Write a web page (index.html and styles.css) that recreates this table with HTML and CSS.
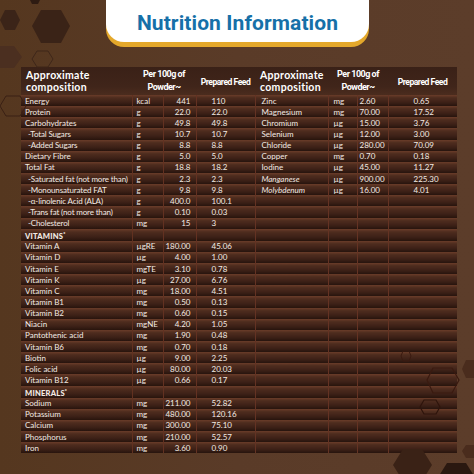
FILE: index.html
```html
<!DOCTYPE html>
<html>
<head>
<meta charset="utf-8">
<link rel="stylesheet" href="styles.css">
</head>
<body>
<div class="page">
  <svg class="deco" width="474" height="474" viewBox="0 0 474 474">
    <polygon points="5,10 15,10 20,20 15,30 5,30 0,20" fill="#3b2418"/>
    <polygon points="41,10 61,10 70,26 61,43 41,43 32,26" fill="#3a2317"/>
    <polygon points="0,46 14,46 22,57 14,68 0,68" fill="#4b2f20"/>
    <polygon points="37,51 48,51 53,59 48,67 37,67 32,59" fill="none" stroke="#3e2619" stroke-width="1"/>
    <polygon points="30,0 40,0 38,4 32,4" fill="#2e1b12"/>
    <polygon points="6,96 20,96 26,106 20,116 6,116 0,106" fill="none" stroke="#3a2014" stroke-width="1"/>
    <polygon points="403,449 422,449 432,465 422,481 403,481 393,465" fill="#3a2216"/>
    <polygon points="447,463 466,463 476,479 466,495 447,495 437,479" fill="#2a1810"/>
    <polygon points="433,368 452,368 459,380 452,393 433,393 427,380" fill="none" stroke="#3a1a10" stroke-width="1.2"/>
    <polygon points="424,400 436,400 440,407 436,414 424,414 420,407" fill="none" stroke="#2e140c" stroke-width="1.2"/>
    <polygon points="403,351 409,351 411,356 409,361 403,361 401,356" fill="none" stroke="#3a1a10" stroke-width="1"/>
    <polygon points="466,360 474,360 474,378 466,378 462,369" fill="#4a2c1d"/>
    <polygon points="466,445 474,445 474,458 466,458 462,451" fill="#4a2c1d"/>
  </svg>

  <header class="title-wrap">
    <h1 class="title">Nutrition Information</h1>
  </header>

  <table class="nutri">
    <colgroup>
      <col class="c-name"><col class="c-unit"><col class="c-val"><col class="c-prep">
      <col class="c-name2"><col class="c-unit2"><col class="c-val2"><col class="c-prep2">
    </colgroup>
    <thead>
      <tr>
        <th class="h-name">Approximate<br>composition</th>
        <th class="h-per" colspan="2">Per 100g of<br>Powder~</th>
        <th class="h-prep">Prepared Feed</th>
        <th class="h-name">Approximate<br>composition</th>
        <th class="h-per" colspan="2">Per 100g of<br>Powder~</th>
        <th class="h-prep">Prepared Feed</th>
      </tr>
    </thead>
    <tbody>
      <tr><td class="n">Energy</td><td class="u">kcal</td><td class="v">441</td><td class="p">110</td>
          <td class="n2">Zinc</td><td class="u2">mg</td><td class="v2">2.60</td><td class="p2">0.65</td></tr>
      <tr><td class="n">Protein</td><td class="u">g</td><td class="v">22.0</td><td class="p">22.0</td>
          <td class="n2">Magnesium</td><td class="u2">mg</td><td class="v2">70.00</td><td class="p2">17.52</td></tr>
      <tr><td class="n">Carbohydrates</td><td class="u">g</td><td class="v">49.8</td><td class="p">49.8</td>
          <td class="n2">Chromium</td><td class="u2">µg</td><td class="v2">15.00</td><td class="p2">3.76</td></tr>
      <tr><td class="n sub">-Total Sugars</td><td class="u">g</td><td class="v">10.7</td><td class="p">10.7</td>
          <td class="n2">Selenium</td><td class="u2">µg</td><td class="v2">12.00</td><td class="p2">3.00</td></tr>
      <tr><td class="n sub">-Added Sugars</td><td class="u">g</td><td class="v">8.8</td><td class="p">8.8</td>
          <td class="n2">Chloride</td><td class="u2">µg</td><td class="v2">280.00</td><td class="p2">70.09</td></tr>
      <tr><td class="n">Dietary Fibre</td><td class="u">g</td><td class="v">5.0</td><td class="p">5.0</td>
          <td class="n2">Copper</td><td class="u2">mg</td><td class="v2">0.70</td><td class="p2">0.18</td></tr>
      <tr><td class="n">Total Fat</td><td class="u">g</td><td class="v">18.8</td><td class="p">18.2</td>
          <td class="n2">Iodine</td><td class="u2">µg</td><td class="v2">45.00</td><td class="p2">11.27</td></tr>
      <tr><td class="n sub">-Saturated fat (not more than)</td><td class="u">g</td><td class="v">2.3</td><td class="p">2.3</td>
          <td class="n2 it">Manganese</td><td class="u2">µg</td><td class="v2">900.00</td><td class="p2">225.30</td></tr>
      <tr><td class="n sub">-Monounsaturated FAT</td><td class="u">g</td><td class="v">9.8</td><td class="p">9.8</td>
          <td class="n2 it">Molybdenum</td><td class="u2">µg</td><td class="v2">16.00</td><td class="p2">4.01</td></tr>
      <tr><td class="n sub">-α-linolenic Acid (ALA)</td><td class="u">g</td><td class="v">400.0</td><td class="p">100.1</td>
          <td></td><td></td><td></td><td></td></tr>
      <tr><td class="n sub">-Trans fat (not more than)</td><td class="u">g</td><td class="v">0.10</td><td class="p">0.03</td>
          <td></td><td></td><td></td><td></td></tr>
      <tr><td class="n sub">-Cholesterol</td><td class="u">mg</td><td class="v">15</td><td class="p">3</td>
          <td></td><td></td><td></td><td></td></tr>
      <tr><td class="n sec">VITAMINS<sup>*</sup></td><td></td><td></td><td></td>
          <td></td><td></td><td></td><td></td></tr>
      <tr><td class="n">Vitamin A</td><td class="u">µgRE</td><td class="v">180.00</td><td class="p">45.06</td>
          <td></td><td></td><td></td><td></td></tr>
      <tr><td class="n">Vitamin D</td><td class="u">µg</td><td class="v">4.00</td><td class="p">1.00</td>
          <td></td><td></td><td></td><td></td></tr>
      <tr><td class="n">Vitamin E</td><td class="u">mgTE</td><td class="v">3.10</td><td class="p">0.78</td>
          <td></td><td></td><td></td><td></td></tr>
      <tr><td class="n">Vitamin K</td><td class="u">µg</td><td class="v">27.00</td><td class="p">6.76</td>
          <td></td><td></td><td></td><td></td></tr>
      <tr><td class="n">Vitamin C</td><td class="u">mg</td><td class="v">18.00</td><td class="p">4.51</td>
          <td></td><td></td><td></td><td></td></tr>
      <tr><td class="n">Vitamin B1</td><td class="u">mg</td><td class="v">0.50</td><td class="p">0.13</td>
          <td></td><td></td><td></td><td></td></tr>
      <tr><td class="n">Vitamin B2</td><td class="u">mg</td><td class="v">0.60</td><td class="p">0.15</td>
          <td></td><td></td><td></td><td></td></tr>
      <tr><td class="n">Niacin</td><td class="u">mgNE</td><td class="v">4.20</td><td class="p">1.05</td>
          <td></td><td></td><td></td><td></td></tr>
      <tr><td class="n">Pantothenic acid</td><td class="u">mg</td><td class="v">1.90</td><td class="p">0.48</td>
          <td></td><td></td><td></td><td></td></tr>
      <tr><td class="n">Vitamin B6</td><td class="u">mg</td><td class="v">0.70</td><td class="p">0.18</td>
          <td></td><td></td><td></td><td></td></tr>
      <tr><td class="n">Biotin</td><td class="u">µg</td><td class="v">9.00</td><td class="p">2.25</td>
          <td></td><td></td><td></td><td></td></tr>
      <tr><td class="n">Folic acid</td><td class="u">µg</td><td class="v">80.00</td><td class="p">20.03</td>
          <td></td><td></td><td></td><td></td></tr>
      <tr><td class="n">Vitamin B12</td><td class="u">µg</td><td class="v">0.66</td><td class="p">0.17</td>
          <td></td><td></td><td></td><td></td></tr>
      <tr><td class="n sec">MINERALS<sup>*</sup></td><td></td><td></td><td></td>
          <td></td><td></td><td></td><td></td></tr>
      <tr><td class="n">Sodium</td><td class="u">mg</td><td class="v">211.00</td><td class="p">52.82</td>
          <td></td><td></td><td></td><td></td></tr>
      <tr><td class="n">Potassium</td><td class="u">mg</td><td class="v">480.00</td><td class="p">120.16</td>
          <td></td><td></td><td></td><td></td></tr>
      <tr><td class="n">Calcium</td><td class="u">mg</td><td class="v">300.00</td><td class="p">75.10</td>
          <td></td><td></td><td></td><td></td></tr>
      <tr><td class="n">Phosphorus</td><td class="u">mg</td><td class="v">210.00</td><td class="p">52.57</td>
          <td></td><td></td><td></td><td></td></tr>
      <tr><td class="n">Iron</td><td class="u">mg</td><td class="v">3.60</td><td class="p">0.90</td>
          <td></td><td></td><td></td><td></td></tr>
    </tbody>
  </table>
</div>
</body>
</html>
```

FILE: styles.css
```css
* { box-sizing: border-box; }
html, body {
  margin: 0;
  padding: 0;
  width: 474px;
  height: 474px;
  overflow: hidden;
  background: #583a27;
}
.page {
  position: relative;
  width: 474px;
  height: 474px;
  background: linear-gradient(90deg, #55371f 0%, #5a3b28 50%, #5c3d2a 100%);
  display: flex;
  flex-direction: column;
}
.deco {
  position: absolute;
  left: 0;
  top: 0;
  z-index: 2;
  pointer-events: none;
}
.title-wrap {
  display: flex;
  justify-content: center;
  padding-left: 1px;
  position: relative;
  z-index: 3;
}
.title {
  margin: 0;
  width: 263px;
  height: 42px;
  background: #ffffff;
  border-radius: 0 0 18px 18px;
  box-shadow: 0 5px 0 #e4a82b;
  color: #1670a8;
  font-family: Roboto, "Liberation Sans", sans-serif;
  font-weight: 700;
  font-size: 21px;
  line-height: 46px;
  text-align: center;
  letter-spacing: 0.1px;
}
.nutri {
  position: relative;
  z-index: 1;
  margin: 25px 0 0 21px;
  width: 436px;
  table-layout: fixed;
  border-collapse: collapse;
  border-spacing: 0;
  font-family: Lato, "Liberation Sans", sans-serif;
  color: #f3ebe4;
}
.c-name { width: 111px; }
.c-unit { width: 31px; }
.c-val { width: 33px; }
.c-prep { width: 59px; }
.c-name2 { width: 73px; }
.c-unit2 { width: 29px; }
.c-val2 { width: 31px; }
.c-prep2 { width: 69px; }

thead tr { height: 28px; }
thead th {
  padding: 0;
  background: linear-gradient(180deg, #3a2117 0%, #40251a 70%, #4b2c1e 100%);
  color: #ffffff;
  font-weight: 700;
  vertical-align: middle;
}
.h-name {
  text-align: left;
  padding-left: 5px;
  font-size: 10.5px;
  line-height: 12px;
  letter-spacing: 0.3px;
}
.h-per {
  font-family: Roboto, "Liberation Sans", sans-serif;
  font-size: 9px;
  line-height: 13px;
  letter-spacing: -0.5px;
  text-align: center;
}
.h-prep {
  font-family: Roboto, "Liberation Sans", sans-serif;
  font-size: 8.6px;
  letter-spacing: -0.5px;
  text-align: center;
  padding-top: 2px;
}

tbody tr { height: 11.15px; }
tbody td {
  padding: 0;
  height: 11.15px;
  font-size: 8px;
  line-height: 10px;
  white-space: nowrap;
  overflow: hidden;
  vertical-align: middle;
  background: linear-gradient(180deg, #6a3c29 0%, #4e2c1e 25%, #3d2117 65%, #28140d 100%);
  border-left: 1px solid rgba(110, 40, 28, 0.45);
}
tbody td:first-child { border-left: none; }
.n { padding-left: 4px; }
.n.sub { padding-left: 7px; letter-spacing: -0.15px; }
.n.sec {
  font-weight: 900;
  font-size: 7.6px;
  letter-spacing: 0.2px;
}
.n.sec sup { font-size: 5px; vertical-align: 3px; }
.u { padding-left: 4px; }
.v { text-align: right; padding-right: 5px; }
.p { padding-left: 15px; }
.n2 { padding-left: 6px; }
.n2.it { font-style: italic; }
.u2 { padding-left: 5px; }
.v2 { padding-left: 2px; }
.p2 { padding-left: 25px; }
```
